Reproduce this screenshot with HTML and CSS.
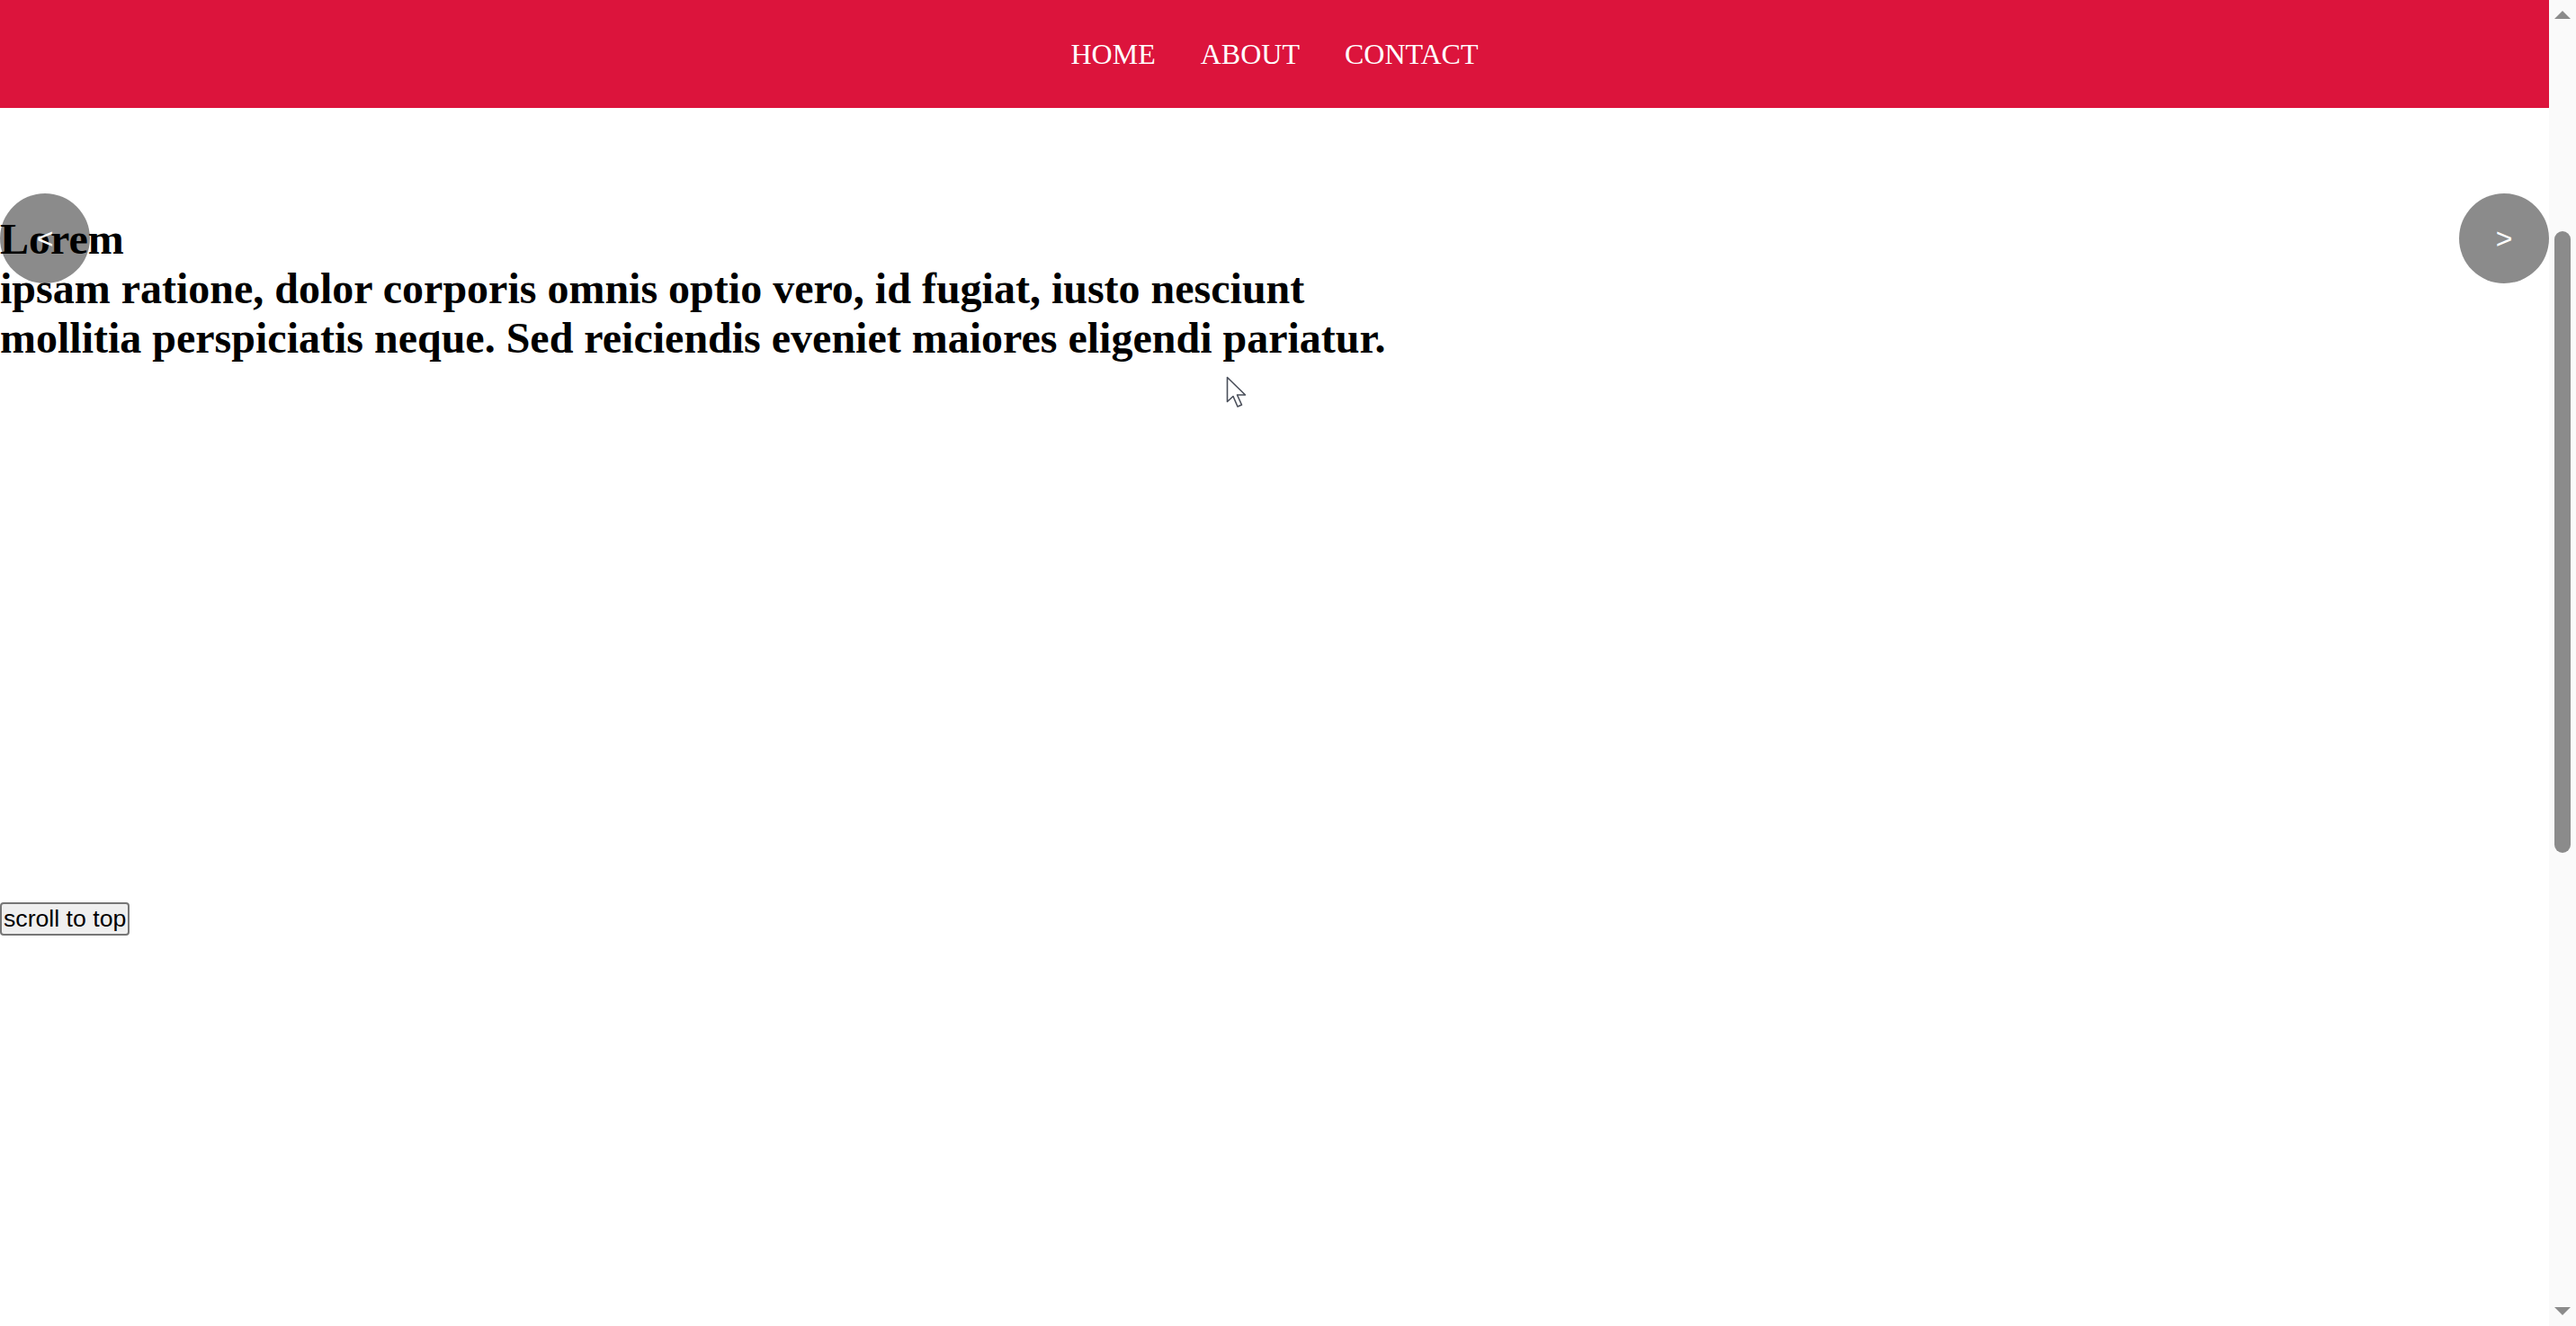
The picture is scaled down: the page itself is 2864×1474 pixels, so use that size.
FILE: index.html
```html
<!DOCTYPE html>
<html lang="en">
<head>
<meta charset="utf-8">
<title>Slider</title>
<link rel="stylesheet" href="styles.css">
</head>
<body>
<div class="window">
  <div class="page">
    <header class="site-header">
      <nav class="nav">
        <a class="nav-link" href="#">HOME</a>
        <a class="nav-link" href="#">ABOUT</a>
        <a class="nav-link" href="#">CONTACT</a>
      </nav>
    </header>
    <main class="content">
      <section class="slider">
        <div class="slide">
          <h2 class="slide-title">Lorem</h2>
          <p class="slide-text">ipsam ratione, dolor corporis omnis optio vero, id fugiat, iusto nesciunt mollitia perspiciatis neque. Sed reiciendis eveniet maiores eligendi pariatur.</p>
        </div>
        <button class="arrow arrow-prev" type="button">&lt;</button>
        <button class="arrow arrow-next" type="button">&gt;</button>
      </section>
      <button class="to-top" type="button">scroll to top</button>
    </main>
  </div>
  <div class="scrollbar" aria-hidden="true">
    <div class="sb-btn"><span class="tri tri-up"></span></div>
    <div class="sb-track"><div class="sb-thumb"></div></div>
    <div class="sb-btn"><span class="tri tri-down"></span></div>
  </div>
</div>
<svg class="cursor" width="26" height="38" viewBox="0 0 26 38" aria-hidden="true">
  <path d="M1.5 1.5 L1.5 28.5 L8 22.5 L13 34 L17.5 32 L12.5 21 L21.5 21 Z" fill="#fff" stroke="#4a4f5a" stroke-width="1.6" stroke-linejoin="round"/>
</svg>
</body>
</html>
```

FILE: styles.css
```css
html,
body {
  margin: 0;
  height: 100%;
  background: #fff;
}

body {
  overflow: hidden;
  font-family: "Liberation Serif", "Times New Roman", serif;
  color: #000;
}

.window {
  height: 100%;
  display: grid;
  grid-template-columns: 1fr 30px;
}

.page {
  min-width: 0;
}

.site-header {
  height: 120px;
  background: #dc143c;
  display: flex;
  align-items: center;
  justify-content: center;
}

.nav {
  display: flex;
  gap: 50px;
}

.nav-link {
  color: #fff;
  text-decoration: none;
  font-size: 32px;
  line-height: 1;
}

.content {
  padding-top: 95px;
}

.slider {
  position: relative;
  height: 788px;
}

.slide {
  padding-top: 23px;
  width: 1590px;
}

.slide-title,
.slide-text {
  margin: 0;
  font-size: 48px;
  font-weight: bold;
  line-height: normal;
}

.arrow {
  position: absolute;
  top: 0;
  width: 100px;
  height: 100px;
  border: none;
  border-radius: 50%;
  padding: 0;
  background: rgba(0, 0, 0, 0.455);
  color: #fff;
  font-family: "Liberation Sans", Arial, sans-serif;
  font-size: 32px;
  display: flex;
  align-items: center;
  justify-content: center;
  z-index: 2;
}

.arrow-prev {
  left: 0;
}

.arrow-next {
  right: 0;
}

.to-top {
  display: block;
  margin: 0;
  padding: 1px 2px;
  border: 2px solid #767676;
  border-radius: 4px;
  background: #efefef;
  color: #000;
  font-family: "Liberation Sans", Arial, sans-serif;
  font-size: 26.67px;
  line-height: 1.15;
}

.scrollbar {
  background: #fafafa;
  display: flex;
  flex-direction: column;
}

.sb-btn {
  height: 30px;
  display: flex;
  align-items: center;
  justify-content: center;
}

.tri {
  width: 0;
  height: 0;
  border-left: 9px solid transparent;
  border-right: 9px solid transparent;
}

.tri-up {
  border-bottom: 9px solid #8b8b8b;
  margin-top: 3px;
}

.tri-down {
  border-top: 9px solid #8b8b8b;
  margin-bottom: 3px;
}

.sb-track {
  flex: 1;
  padding-top: 227px;
}

.sb-thumb {
  width: 18px;
  height: 691px;
  margin: 0 auto;
  border-radius: 9px;
  background: #8b8b8b;
}

.cursor {
  position: fixed;
  left: 1363px;
  top: 418px;
  z-index: 20;
}
```
